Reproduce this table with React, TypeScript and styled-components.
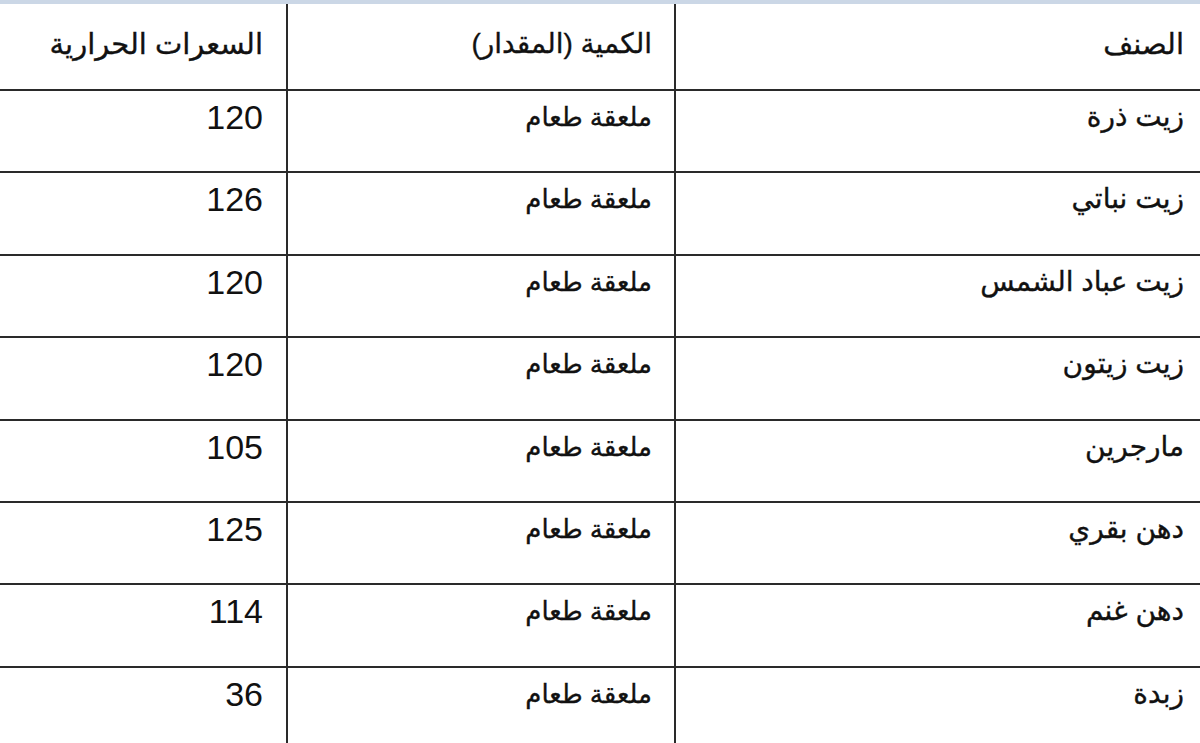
import React from 'react';
import styled, { createGlobalStyle } from 'styled-components';

interface FoodRow {
  name: string;
  amount: string;
  calories: number;
}

const rows: FoodRow[] = [
  { name: 'زيت ذرة', amount: 'ملعقة طعام', calories: 120 },
  { name: 'زيت نباتي', amount: 'ملعقة طعام', calories: 126 },
  { name: 'زيت عباد الشمس', amount: 'ملعقة طعام', calories: 120 },
  { name: 'زيت زيتون', amount: 'ملعقة طعام', calories: 120 },
  { name: 'مارجرين', amount: 'ملعقة طعام', calories: 105 },
  { name: 'دهن بقري', amount: 'ملعقة طعام', calories: 125 },
  { name: 'دهن غنم', amount: 'ملعقة طعام', calories: 114 },
  { name: 'زبدة', amount: 'ملعقة طعام', calories: 36 },
];

const GlobalStyle = createGlobalStyle`
  html, body {
    margin: 0;
    padding: 0;
    background: #ffffff;
    overflow: hidden;
  }
`;

const Page = styled.div`
  width: 1200px;
  height: 743px;
  overflow: hidden;
  background: #ffffff;
  border-top: 4px solid #cbd7e6;
  box-sizing: border-box;
  direction: rtl;
  font-family: 'Liberation Sans', 'DejaVu Sans', sans-serif;
  color: #111111;
`;

const Row = styled.div<{ $header?: boolean }>`
  display: grid;
  grid-template-columns: 526px 388px 1fr;
  height: ${(p) => (p.$header ? '85px' : '80.4px')};
  border-bottom: 2px solid #2a2a2a;
`;

const Cell = styled.div<{ $pad: number; $header?: boolean }>`
  display: flex;
  justify-content: flex-start;
  align-items: flex-start;
  padding-right: ${(p) => p.$pad}px;
  padding-top: ${(p) => (p.$header ? '23px' : '9px')};
  line-height: 34px;
  &:not(:last-child) {
    border-left: 2px solid #2a2a2a;
  }
`;

const Text = styled.span<{ $size: number }>`
  display: inline-block;
  white-space: nowrap;
  font-size: ${(p) => p.$size}px;
  -webkit-text-stroke: 0.35px #111111;
`;

const Number = styled.span`
  display: inline-block;
  font-size: 34px;
`;

const pads = [16, 22, 23];

export default function App() {
  return (
    <>
      <GlobalStyle />
      <Page>
        <Row $header>
          <Cell $header $pad={pads[0]}>
            <Text $size={29}>الصنف</Text>
          </Cell>
          <Cell $header $pad={pads[1]}>
            <Text $size={28}>الكمية (المقدار)</Text>
          </Cell>
          <Cell $header $pad={pads[2]}>
            <Text $size={29}>السعرات الحرارية</Text>
          </Cell>
        </Row>
        {rows.map((r, i) => (
          <Row key={i}>
            <Cell $pad={pads[0]}>
              <Text $size={28}>{r.name}</Text>
            </Cell>
            <Cell $pad={pads[1]}>
              <Text $size={26}>{r.amount}</Text>
            </Cell>
            <Cell $pad={pads[2]}>
              <Number>{r.calories}</Number>
            </Cell>
          </Row>
        ))}
      </Page>
    </>
  );
}
